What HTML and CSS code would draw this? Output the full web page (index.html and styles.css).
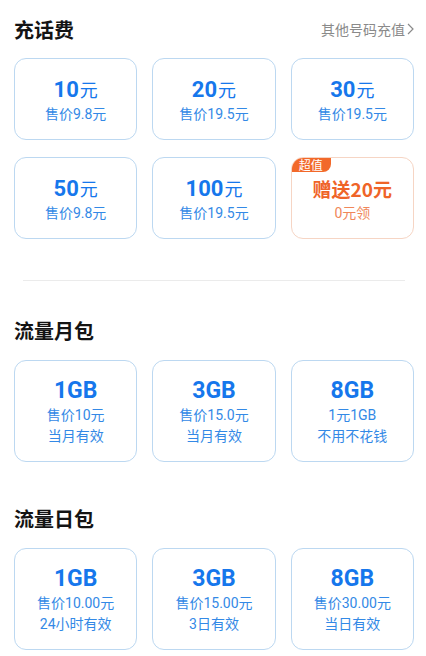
FILE: index.html
```html
<!DOCTYPE html>
<html lang="zh-CN">
<head>
  <meta charset="UTF-8">
  <meta name="viewport" content="width=device-width, initial-scale=1.0">
  <title>充值中心</title>
  <link rel="stylesheet" href="styles.css">
</head>
<body>
  <div class="page">
    <!-- 话费 -->
    <div class="section-head first">
      <h2 class="section-title">充话费</h2>
      <a class="more-link" href="#">其他号码充值<svg class="arrow" width="7" height="12" viewBox="0 0 7 12"><path d="M1 1l5 5-5 5" fill="none" stroke="#8a8a8a" stroke-width="1.2"/></svg></a>
    </div>
    <div class="card-grid">
      <div class="card small">
        <div class="amount"><b>10</b>元</div>
        <div class="sub">售价9.8元</div>
      </div>
      <div class="card small">
        <div class="amount"><b>20</b>元</div>
        <div class="sub">售价19.5元</div>
      </div>
      <div class="card small">
        <div class="amount"><b>30</b>元</div>
        <div class="sub">售价19.5元</div>
      </div>
      <div class="card small">
        <div class="amount"><b>50</b>元</div>
        <div class="sub">售价9.8元</div>
      </div>
      <div class="card small">
        <div class="amount"><b>100</b>元</div>
        <div class="sub">售价19.5元</div>
      </div>
      <div class="card small promo">
        <span class="badge">超值</span>
        <div class="amount gift">赠送20元</div>
        <div class="sub">0元领</div>
      </div>
    </div>

    <div class="divider"></div>

    <!-- 流量月包 -->
    <div class="section-head">
      <h2 class="section-title">流量月包</h2>
    </div>
    <div class="card-grid">
      <div class="card tall">
        <div class="amount"><b>1GB</b></div>
        <div class="sub">售价10元</div>
        <div class="sub">当月有效</div>
      </div>
      <div class="card tall">
        <div class="amount"><b>3GB</b></div>
        <div class="sub">售价15.0元</div>
        <div class="sub">当月有效</div>
      </div>
      <div class="card tall">
        <div class="amount"><b>8GB</b></div>
        <div class="sub">1元1GB</div>
        <div class="sub">不用不花钱</div>
      </div>
    </div>

    <!-- 流量日包 -->
    <div class="section-head spaced">
      <h2 class="section-title">流量日包</h2>
    </div>
    <div class="card-grid">
      <div class="card tall">
        <div class="amount"><b>1GB</b></div>
        <div class="sub">售价10.00元</div>
        <div class="sub">24小时有效</div>
      </div>
      <div class="card tall">
        <div class="amount"><b>3GB</b></div>
        <div class="sub">售价15.00元</div>
        <div class="sub">3日有效</div>
      </div>
      <div class="card tall">
        <div class="amount"><b>8GB</b></div>
        <div class="sub">售价30.00元</div>
        <div class="sub">当日有效</div>
      </div>
    </div>
  </div>
</body>
</html>
```

FILE: styles.css
```css
body {
  margin: 0;
  background: #ffffff;
  font-family: Roboto, "Noto Sans CJK SC", sans-serif;
  color: #111;
}

.page {
  padding: 0 12px 0 14px;
}

.section-head {
  display: flex;
  justify-content: space-between;
  align-items: center;
  height: 60px;
}

.section-head.first {
  height: 58px;
}

.section-head.spaced {
  margin-top: 26px;
}

.section-title {
  margin: 0;
  font-family: "Noto Sans CJK SC", sans-serif;
  font-size: 20px;
  font-weight: bold;
  color: #141414;
}

.more-link {
  font-family: "Noto Sans CJK SC", sans-serif;
  font-size: 14px;
  color: #8a8a8a;
  text-decoration: none;
  display: flex;
  align-items: center;
}

.more-link .arrow {
  margin-left: 2px;
}

.card-grid {
  display: grid;
  grid-template-columns: repeat(3, 1fr);
  column-gap: 15px;
  row-gap: 17px;
}

.card {
  position: relative;
  box-sizing: border-box;
  border: 1px solid #bcd8f1;
  border-radius: 12px;
  display: flex;
  flex-direction: column;
  align-items: center;
  justify-content: center;
  color: #2b86e8;
  overflow: hidden;
}

.card.small {
  height: 82px;
  padding-top: 2px;
}

.card.tall {
  height: 102px;
}

.amount {
  font-size: 18px;
  line-height: 28px;
  color: #1677ec;
  font-family: "Noto Sans CJK SC", sans-serif;
}

.amount b {
  font-family: Roboto, sans-serif;
  font-size: 22px;
  font-weight: bold;
  margin-right: 1px;
}

.tall .amount b {
  font-size: 23px;
  margin-right: 0;
}

.sub {
  font-size: 14px;
  line-height: 21px;
  color: #3389e6;
}

.promo {
  border-color: #f6d5c4;
}

.promo .amount.gift {
  color: #ef6428;
  font-weight: bold;
  font-size: 19px;
}

.promo .sub {
  color: #f0875a;
}

.badge {
  position: absolute;
  top: 0;
  left: 0;
  background: #f2692a;
  color: #fff;
  font-family: "Noto Sans CJK SC", sans-serif;
  font-size: 12px;
  line-height: 14px;
  padding: 0 8px 0 7px;
  border-bottom-right-radius: 8px;
}

.divider {
  height: 1px;
  background: #ebebeb;
  margin: 41px 9px 19px 9px;
}
```
